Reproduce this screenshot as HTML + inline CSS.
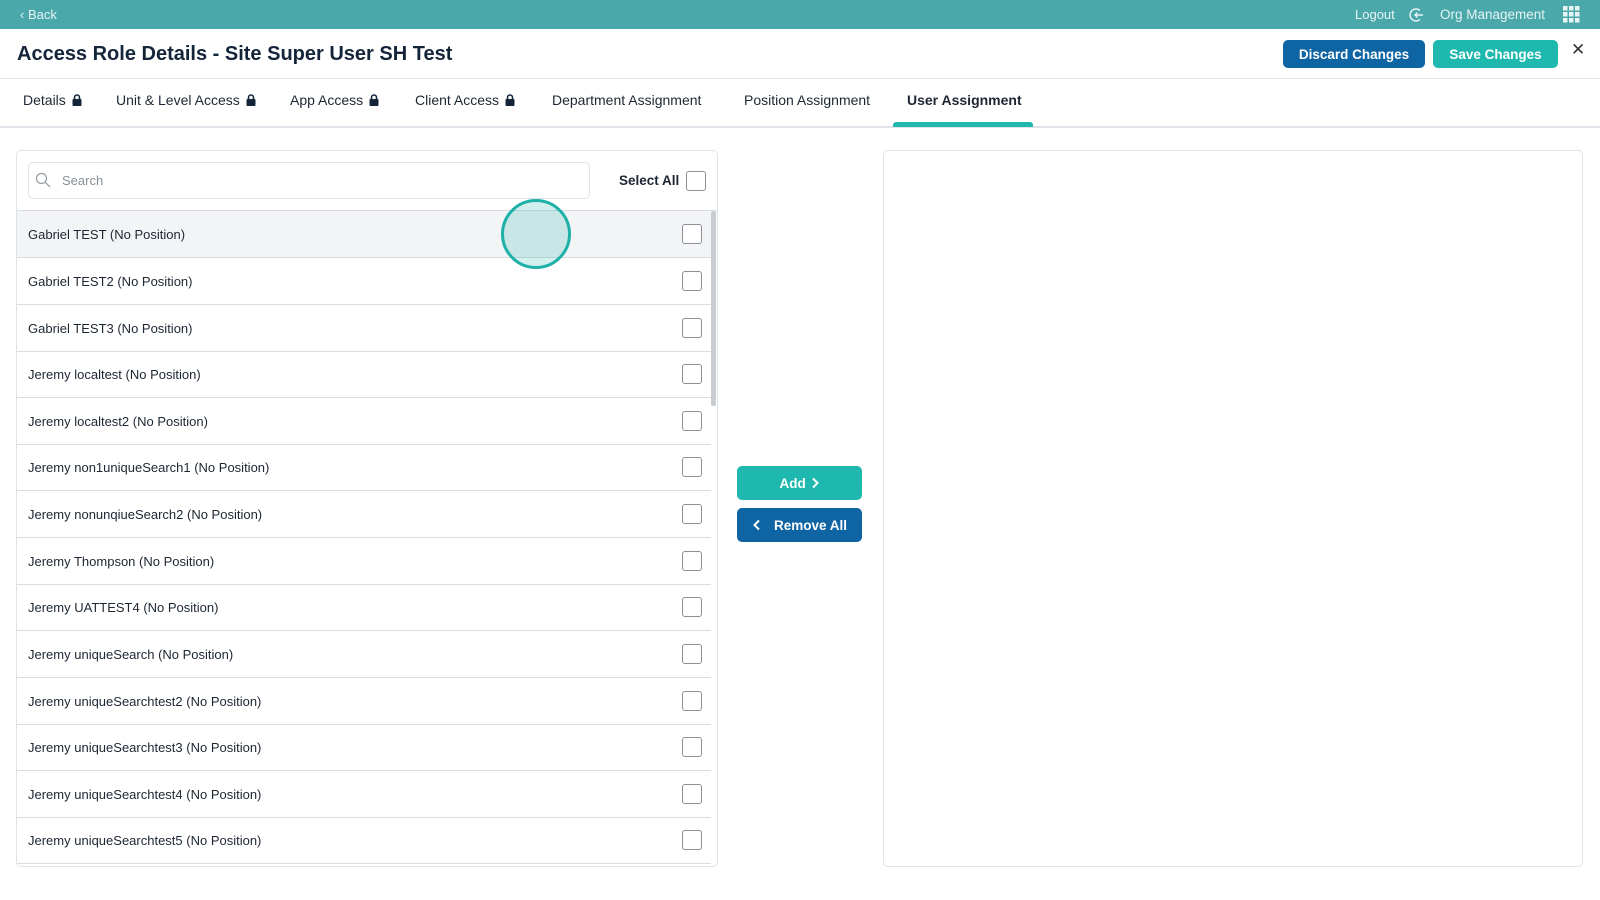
<!DOCTYPE html>
<html><head><style>
*{box-sizing:border-box;margin:0;padding:0}
body{width:1600px;height:900px;background:#fff;font-family:"Liberation Sans",sans-serif;color:#1d2733;position:relative;overflow:hidden}
.abs{position:absolute}
.top{left:0;top:0;width:1600px;height:29px;background:#4aa8ab;color:#e6f4f4;font-size:13px}
.btn{position:absolute;border-radius:5px;color:#fff;font-size:13.5px;font-weight:bold;display:flex;align-items:center;justify-content:center}
.tab{position:absolute;top:92px;font-size:14px;color:#1d2733}
.lock{display:inline-block;width:10px;height:12px;vertical-align:-1px;margin-left:6px}
.row{position:absolute;left:17px;width:694px;height:47px;border-bottom:1px solid #d9dde1;font-size:13px;display:flex;align-items:center;padding-left:11px}
.cb{position:absolute;right:9px;top:13px;width:20px;height:20px;border:1.5px solid #8a9096;border-radius:3px;background:#fff}
</style></head><body>
<div class="abs top">
<span class="abs" style="left:20px;top:7px">‹ Back</span>
<span class="abs" style="left:1355px;top:7px">Logout</span>
<svg class="abs" style="left:1409px;top:7px" width="16" height="16" viewBox="0 0 16 16"><path d="M11 3.5A6 6 0 1 0 11 12.5" fill="none" stroke="#e6f4f4" stroke-width="1.4"/><path d="M14 8H6M8.5 5.5L6 8l2.5 2.5" fill="none" stroke="#e6f4f4" stroke-width="1.4"/></svg>
<span class="abs" style="left:1440px;top:7px;font-size:13.5px">Org Management</span>
<svg class="abs" style="left:1563px;top:6px" width="17" height="17" viewBox="0 0 17 17" fill="#e6f4f4"><rect x="0" y="0" width="4.5" height="4.5"/><rect x="6" y="0" width="4.5" height="4.5"/><rect x="12" y="0" width="4.5" height="4.5"/><rect x="0" y="6" width="4.5" height="4.5"/><rect x="6" y="6" width="4.5" height="4.5"/><rect x="12" y="6" width="4.5" height="4.5"/><rect x="0" y="12" width="4.5" height="4.5"/><rect x="6" y="12" width="4.5" height="4.5"/><rect x="12" y="12" width="4.5" height="4.5"/></svg>
</div>
<div class="abs" style="left:17px;top:43px;font-size:20px;font-weight:bold;color:#14253a">Access Role Details - Site Super User SH Test</div>
<div class="btn" style="left:1283px;top:40px;width:142px;height:28px;background:#0f64a3">Discard Changes</div>
<div class="btn" style="left:1433px;top:40px;width:125px;height:28px;background:#1fb8ae">Save Changes</div>
<div class="abs" style="left:1571px;top:40px;font-size:17px;color:#333">✕</div>
<div class="abs" style="left:0;top:78px;width:1600px;height:1px;background:#e1e4e8"></div>
<div class="abs" style="left:0;top:126px;width:1600px;height:2px;background:#e1e4e8"></div>
<div class="abs" style="left:893px;top:122px;width:140px;height:5px;background:#1fb8ae;border-radius:3px 3px 0 0"></div>
<div class="tab" style="left:23px">Details<svg class="lock" viewBox="0 0 10 12"><path d="M2.5 5V3.5a2.5 2.5 0 0 1 5 0V5" fill="none" stroke="#14253a" stroke-width="1.6"/><rect x="0.5" y="5" width="9" height="7" rx="1" fill="#14253a"/></svg></div>
<div class="tab" style="left:116px">Unit &amp; Level Access<svg class="lock" viewBox="0 0 10 12"><path d="M2.5 5V3.5a2.5 2.5 0 0 1 5 0V5" fill="none" stroke="#14253a" stroke-width="1.6"/><rect x="0.5" y="5" width="9" height="7" rx="1" fill="#14253a"/></svg></div>
<div class="tab" style="left:290px">App Access<svg class="lock" viewBox="0 0 10 12"><path d="M2.5 5V3.5a2.5 2.5 0 0 1 5 0V5" fill="none" stroke="#14253a" stroke-width="1.6"/><rect x="0.5" y="5" width="9" height="7" rx="1" fill="#14253a"/></svg></div>
<div class="tab" style="left:415px">Client Access<svg class="lock" viewBox="0 0 10 12"><path d="M2.5 5V3.5a2.5 2.5 0 0 1 5 0V5" fill="none" stroke="#14253a" stroke-width="1.6"/><rect x="0.5" y="5" width="9" height="7" rx="1" fill="#14253a"/></svg></div>
<div class="tab" style="left:552px">Department Assignment</div>
<div class="tab" style="left:744px">Position Assignment</div>
<div class="tab" style="left:907px;font-weight:bold">User Assignment</div>

<div class="abs" style="left:16px;top:150px;width:702px;height:717px;border:1px solid #dfe2e6;border-radius:5px"></div>
<div class="abs" style="left:28px;top:162px;width:562px;height:37px;border:1px solid #dfe2e6;border-radius:5px"></div>
<svg class="abs" style="left:35px;top:172px" width="16" height="16" viewBox="0 0 16 16"><circle cx="6.5" cy="6.5" r="5" fill="none" stroke="#9aa0a6" stroke-width="1.3"/><path d="M10.2 10.2L15 15" stroke="#9aa0a6" stroke-width="1.3"/></svg>
<div class="abs" style="left:62px;top:173px;font-size:13px;color:#8a9096">Search</div>
<div class="abs" style="left:619px;top:173px;font-size:13.5px;font-weight:bold;color:#1d2733">Select All</div>
<div class="abs" style="left:686px;top:171px;width:20px;height:20px;border:1.5px solid #8a9096;border-radius:3px"></div>
<div class="abs" style="left:17px;top:210px;width:700px;height:1px;background:#d9dde1"></div>

<div class="row" style="top:211px;background:#f3f4f6">Gabriel TEST (No Position)<div class="cb"></div></div>
<div class="row" style="top:258px">Gabriel TEST2 (No Position)<div class="cb"></div></div>
<div class="row" style="top:305px">Gabriel TEST3 (No Position)<div class="cb"></div></div>
<div class="row" style="top:351px">Jeremy localtest (No Position)<div class="cb"></div></div>
<div class="row" style="top:398px">Jeremy localtest2 (No Position)<div class="cb"></div></div>
<div class="row" style="top:444px">Jeremy non1uniqueSearch1 (No Position)<div class="cb"></div></div>
<div class="row" style="top:491px">Jeremy nonunqiueSearch2 (No Position)<div class="cb"></div></div>
<div class="row" style="top:538px">Jeremy Thompson (No Position)<div class="cb"></div></div>
<div class="row" style="top:584px">Jeremy UATTEST4 (No Position)<div class="cb"></div></div>
<div class="row" style="top:631px">Jeremy uniqueSearch (No Position)<div class="cb"></div></div>
<div class="row" style="top:678px">Jeremy uniqueSearchtest2 (No Position)<div class="cb"></div></div>
<div class="row" style="top:724px">Jeremy uniqueSearchtest3 (No Position)<div class="cb"></div></div>
<div class="row" style="top:771px">Jeremy uniqueSearchtest4 (No Position)<div class="cb"></div></div>
<div class="row" style="top:817px">Jeremy uniqueSearchtest5 (No Position)<div class="cb"></div></div>
<div class="abs" style="left:711px;top:211px;width:5px;height:195px;background:#c8ccd0;border-radius:2px"></div>

<div class="abs" style="left:501px;top:199px;width:70px;height:70px;border-radius:50%;border:3px solid #1fb0a8;background:rgba(31,176,168,0.2)"></div>

<div class="btn" style="left:737px;top:466px;width:125px;height:34px;background:#1fb8ae">Add&nbsp;<svg width="10" height="12" viewBox="0 0 10 12"><path d="M3 1.5L7.5 6 3 10.5" fill="none" stroke="#fff" stroke-width="2"/></svg></div>
<div class="btn" style="left:737px;top:508px;width:125px;height:34px;background:#0f64a3"><svg width="10" height="12" viewBox="0 0 10 12" style="margin-right:12px"><path d="M7 1.5L2.5 6 7 10.5" fill="none" stroke="#fff" stroke-width="2"/></svg>Remove All</div>

<div class="abs" style="left:883px;top:150px;width:700px;height:717px;border:1px solid #dfe2e6;border-radius:5px"></div>
</body></html>
